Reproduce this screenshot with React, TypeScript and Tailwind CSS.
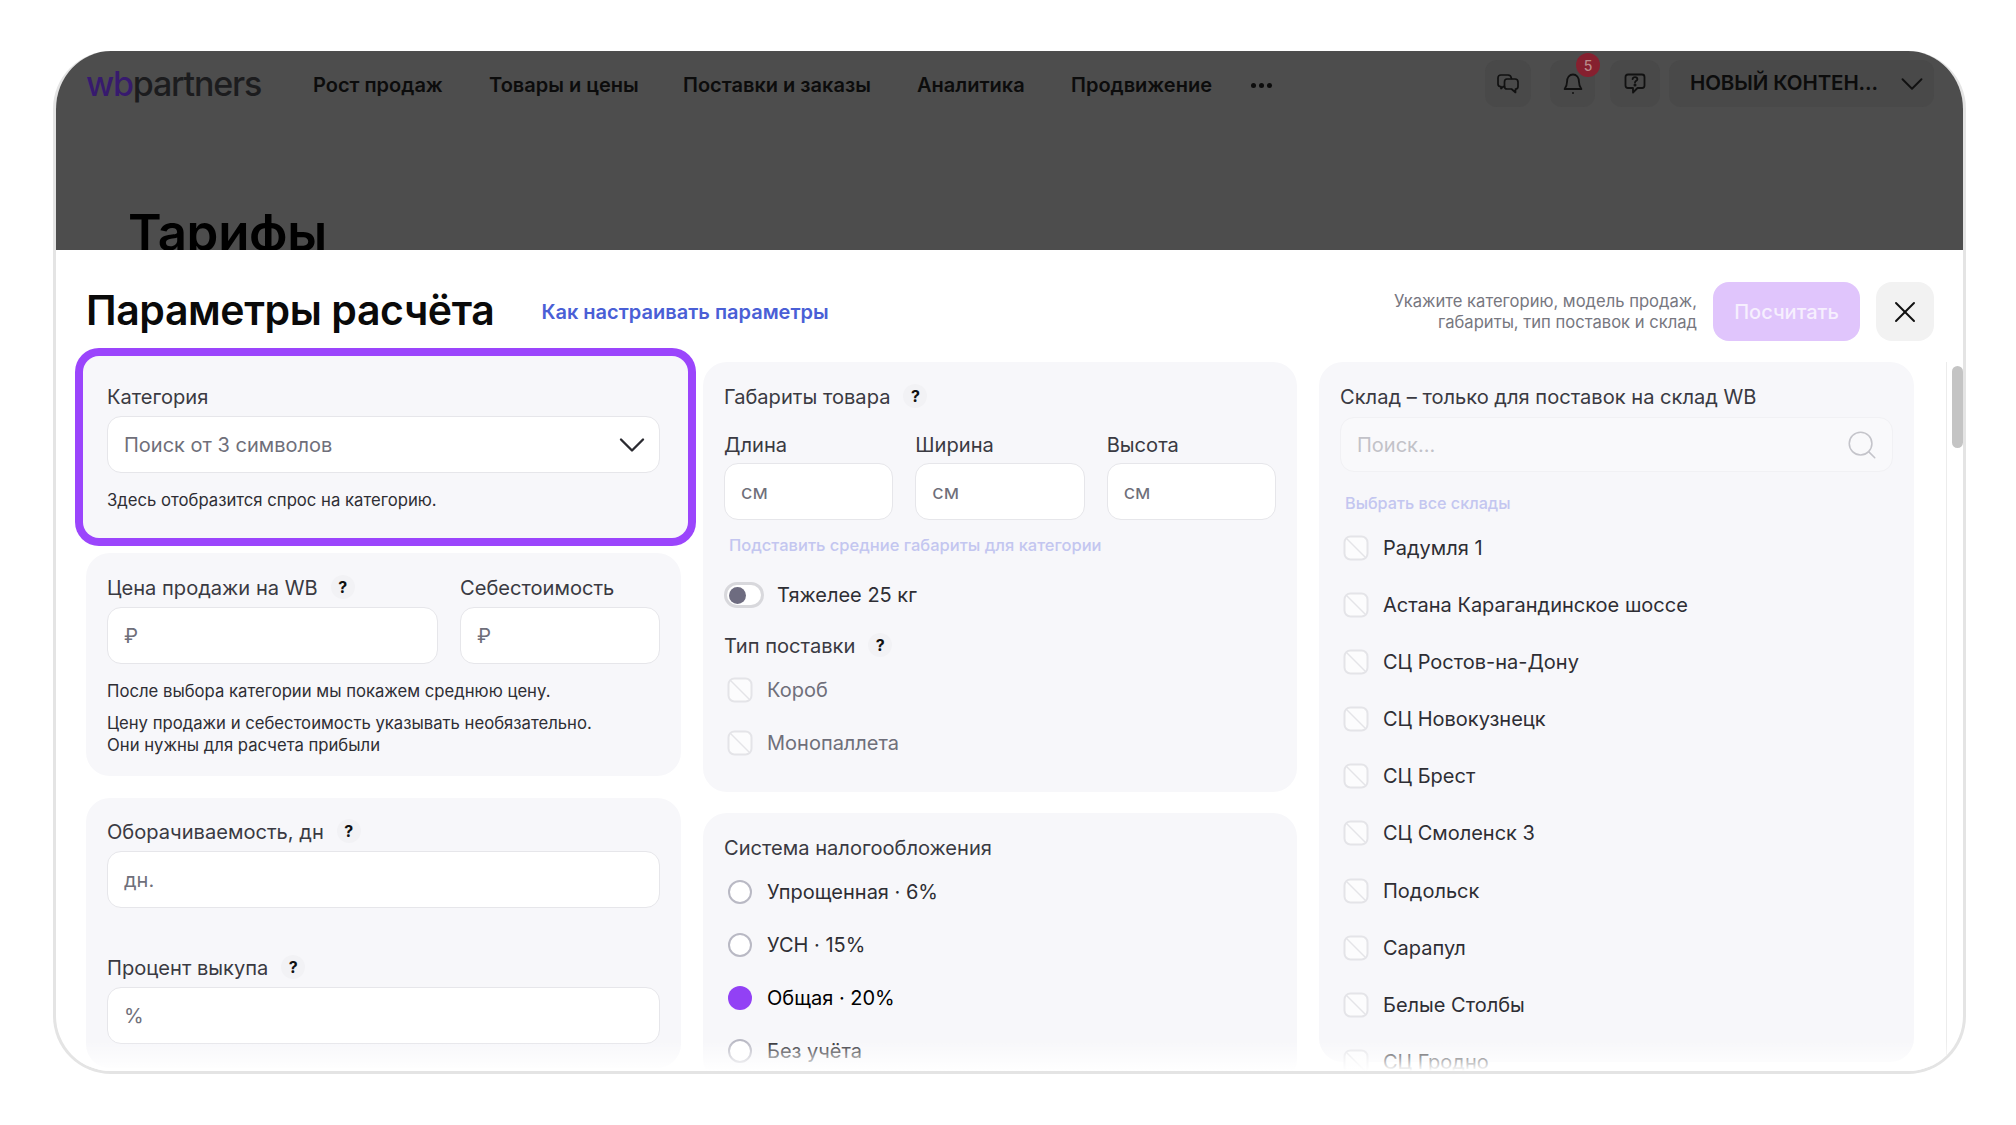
import { ChevronDown, Search, X } from "lucide-react";

const font = "font-['Inter','Noto_Sans',sans-serif]";

const navItems = [
  { label: "Рост продаж", cls: "w-[130px] mr-[46px]" },
  { label: "Товары и цены", cls: "w-[148px] mr-[46px]" },
  { label: "Поставки и заказы", cls: "w-[189px] mr-[45px]" },
  { label: "Аналитика", cls: "w-[110px] mr-[44px]" },
  { label: "Продвижение", cls: "w-[143px] mr-[37px]" },
];

const warehouses = [
  "Радумля 1",
  "Астана Карагандинское шоссе",
  "СЦ Ростов-на-Дону",
  "СЦ Новокузнецк",
  "СЦ Брест",
  "СЦ Смоленск 3",
  "Подольск",
  "Сарапул",
  "Белые Столбы",
  "СЦ Гродно",
];

const Hint = () => (
  <span className="ml-[13px] flex h-[24px] w-[24px] -translate-y-[1px] items-center justify-center rounded-full bg-[#f2f2f5] text-[16px] font-bold leading-none text-[#111]">
    ?
  </span>
);

const Label = ({ text, hint }: { text: string; hint?: boolean }) => (
  <div className="flex h-[24px] items-center text-[20.1px] leading-[24px] text-[#3a3a42] whitespace-nowrap">
    {text}
    {hint && <Hint />}
  </div>
);

const Field = ({ text, cls }: { text: string; cls: string }) => (
  <div
    className={`flex h-[57px] items-center rounded-[14px] border border-[#e6e6ea] bg-white px-[16px] text-[20px] text-[#6f6f7a] ${cls}`}
  >
    {text}
  </div>
);

const Check = () => (
  <svg width="26" height="26" viewBox="0 0 26 26" className="shrink-0">
    <rect x="1.5" y="1.5" width="23" height="23" rx="6" fill="#fcfcfd" stroke="#e4e4e8" strokeWidth="2" />
    <path d="M4 4L22 22" stroke="#e4e4e8" strokeWidth="1.5" />
  </svg>
);

const Radio = ({ active }: { active?: boolean }) =>
  active ? (
    <span className="h-[24px] w-[24px] shrink-0 rounded-full bg-[#9241f5]" />
  ) : (
    <span className="h-[24px] w-[24px] shrink-0 rounded-full border-2 border-[#b9b9c4] bg-white" />
  );

const ChatIcon = () => (
  <svg width="22" height="20" viewBox="0 0 22 20" fill="none" stroke="#111" strokeWidth="1.7" strokeLinejoin="round" strokeLinecap="round">
    <path d="M7.5 12.5H6.5L4 14.5V12.5H3.5Q1 12.5 1 10V4Q1 1 4 1H11Q14 1 14.5 4.5" />
    <path d="M10 5H18Q21 5 21 8V12.5Q21 15 18.5 15V18.5L14.5 15H10Q7.5 15 7.5 12.5V8Q7.5 5 10 5Z" />
  </svg>
);

const BellIcon = () => (
  <svg width="20" height="22" viewBox="0 0 20 22" fill="none" stroke="#111" strokeWidth="1.8" strokeLinejoin="round" strokeLinecap="round">
    <path d="M4 9C4 4.6 6.4 1.5 10 1.5C13.6 1.5 16 4.6 16 9C16 12.5 17 14.2 18.4 16H1.6C3 14.2 4 12.5 4 9Z" />
    <circle cx="10" cy="20" r="1" fill="#111" stroke="none" />
  </svg>
);

const HelpIcon = () => (
  <svg width="22" height="21" viewBox="0 0 22 21" fill="none" stroke="#111" strokeWidth="1.8" strokeLinejoin="round">
    <path d="M4 1.5H18Q20.5 1.5 20.5 4V12.5Q20.5 15 18 15H13.5L9 19.5V15H4Q1.5 15 1.5 12.5V4Q1.5 1.5 4 1.5Z" />
    <path d="M8.6 6.2C8.8 4.8 9.9 4.2 11 4.2C12.3 4.2 13.4 5 13.4 6.2C13.4 7.8 11 7.9 11 9.6" strokeLinecap="round" />
    <circle cx="11" cy="12" r="0.6" fill="#111" />
  </svg>
);

const IconBox = ({ children, cls }: { children: React.ReactNode; cls: string }) => (
  <div className={`relative flex h-[47px] items-center justify-center rounded-[12px] bg-[#494949] ${cls}`}>
    {children}
  </div>
);

export default function App() {
  return (
    <div className={`min-h-[1125px] bg-white pl-[53px] pt-[51px] ${font}`}>
      <div className="relative flex h-[1023px] w-[1913px] flex-col overflow-hidden rounded-[58px] border-[3px] border-t-0 border-[#e4e4e4] bg-white">
        {/* затемнённая страница за модалкой */}
        <header className="-mx-[3px] h-[199px] shrink-0 overflow-hidden bg-[#4d4d4d]">
          <div className="flex h-[56px] items-start pl-[33px] pr-[32px] pt-[9px]">
            <div className="mr-[55px] flex h-[47px] w-[172px] items-center text-[34px] font-medium leading-none tracking-[-1.2px]">
              <span className="text-[#371a6e]">wb</span>
              <span className="text-[#1c1c1e]">partners</span>
            </div>
            {navItems.map((n) => (
              <div key={n.label} className={`flex h-[50px] items-center whitespace-nowrap text-[20px] font-semibold text-[#0c0c0c] ${n.cls}`}>
                {n.label}
              </div>
            ))}
            <div className="flex h-[50px] items-center gap-[3px]">
              <span className="h-[5px] w-[5px] rounded-full bg-[#0c0c0c]" />
              <span className="h-[5px] w-[5px] rounded-full bg-[#0c0c0c]" />
              <span className="h-[5px] w-[5px] rounded-full bg-[#0c0c0c]" />
            </div>
            <div className="ml-auto flex items-center">
              <IconBox cls="w-[46px] mr-[19px]">
                <ChatIcon />
              </IconBox>
              <IconBox cls="w-[45px] mr-[15px]">
                <BellIcon />
                <span className="absolute -right-[5px] -top-[7px] flex h-[24px] w-[24px] items-center justify-center rounded-full bg-[#86202f] text-[14px] font-medium text-[#b98a8a]">
                  5
                </span>
              </IconBox>
              <IconBox cls="w-[50px] mr-[9px]">
                <HelpIcon />
              </IconBox>
              <div className="flex h-[47px] w-[265px] items-center justify-between rounded-[12px] bg-[#494949] pl-[21px] pr-[3px] text-[20.5px] font-semibold tracking-[-0.1px] text-[#0c0c0c]">
                НОВЫЙ КОНТЕН...
                <ChevronDown size={38} strokeWidth={1.2} color="#111" />
              </div>
            </div>
          </div>
          <h1 className="ml-[75px] mt-[96px] text-[51px] font-semibold leading-[60px] tracking-[-0.3px] text-black">Тарифы</h1>
        </header>

        <div className="relative min-h-0 flex-1 overflow-hidden pl-[30px] pr-[29px] pt-[32px]">
          <div className="flex h-[59px] items-center">
            <h2 className="-translate-y-[1px] text-[41px] font-semibold leading-none tracking-[-0.4px] text-[#0a0a0a]">Параметры расчёта</h2>
            <a className="ml-[47px] text-[20px] font-semibold text-[#4a5fd6]">Как настраивать параметры</a>
            <div className="ml-auto mr-[16px] text-right text-[16.6px] leading-[21px] text-[#77777f]">
              <div>Укажите категорию, модель продаж,</div>
              <div>габариты, тип поставок и склад</div>
            </div>
            <button className="mr-[16px] h-[59px] w-[147px] rounded-[16px] bg-[#e0c5fc] text-[20px] font-medium text-[#f6effe]">
              Посчитать
            </button>
            <button className="flex h-[59px] w-[58px] items-center justify-center rounded-[16px] bg-[#f2f2f2]">
              <X size={36} strokeWidth={1.3} color="#111" />
            </button>
          </div>

          <div className="mt-[21px] flex gap-[22px]">
            <div className="flex w-[595px] flex-col">
              {/* подсвеченный блок */}
              <div className="relative z-10 -ml-[3px] -mr-[7px] -mt-[6px] mb-[15px] h-[182px] rounded-[16px] bg-[#f7f7fa] pl-[24px] pr-[28px] pt-[29px] ring-8 ring-[#9b45fc]">
                <Label text="Категория" />
                <div className="mt-[7px] flex h-[57px] items-center justify-between rounded-[14px] border border-[#e6e6ea] bg-white pl-[16px] pr-[5px] text-[20px] text-[#6f6f7a]">
                  Поиск от 3 символов
                  <ChevronDown size={44} strokeWidth={1.3} color="#2a2a30" />
                </div>
                <div className="mt-[17px] text-[16.7px] leading-[21px] text-[#2e2e34]">Здесь отобразится спрос на категорию.</div>
              </div>

              <div className="h-[223px] rounded-[24px] bg-[#f7f7fa] px-[21px] pt-[23px]">
                <div className="flex gap-[22px]">
                  <div className="w-[331px]">
                    <Label text="Цена продажи на WB" hint />
                    <Field text="₽" cls="mt-[7px]" />
                  </div>
                  <div className="w-[200px]">
                    <Label text="Себестоимость" />
                    <Field text="₽" cls="mt-[7px]" />
                  </div>
                </div>
                <div className="mt-[17px] text-[16.7px] leading-[21px] text-[#2e2e34]">После выбора категории мы покажем среднюю цену.</div>
                <div className="mt-[10px] text-[16.7px] leading-[22px] text-[#2e2e34]">
                  <div>Цену продажи и себестоимость указывать необязательно.</div>
                  <div>Они нужны для расчета прибыли</div>
                </div>
              </div>

              <div className="mt-[22px] h-[270px] rounded-[24px] bg-[#f7f7fa] px-[21px] pt-[22px]">
                <Label text="Оборачиваемость, дн" hint />
                <Field text="дн." cls="mt-[7px]" />
                <div className="mt-[48px]">
                  <Label text="Процент выкупа" hint />
                </div>
                <Field text="%" cls="mt-[7px]" />
              </div>
            </div>

            <div className="flex w-[594px] flex-col">
              <div className="h-[430px] rounded-[24px] bg-[#f7f7fa] px-[21px] pt-[23px]">
                <Label text="Габариты товара" hint />
                <div className="mt-[24px] flex gap-[22px]">
                  {["Длина", "Ширина", "Высота"].map((t) => (
                    <div key={t} className="w-[170px]">
                      <Label text={t} />
                      <Field text="см" cls="mt-[6px]" />
                    </div>
                  ))}
                </div>
                <div className="ml-[5px] mt-[14px] text-[16.5px] font-medium leading-[22px] text-[#c3c6f0]">Подставить средние габариты для категории</div>
                <div className="mt-[26px] flex items-center gap-[13px] text-[20px] leading-[25px] text-[#2e2e34]">
                  <span className="flex h-[26px] w-[40px] items-center rounded-full border-[3px] border-[#d8d8dc] bg-white pl-[2px]">
                    <span className="h-[17px] w-[17px] rounded-full bg-[#6e6c80]" />
                  </span>
                  Тяжелее 25 кг
                </div>
                <div className="mt-[26px]">
                  <Label text="Тип поставки" hint />
                </div>
                <div className="mt-[19px] flex h-[26px] items-center gap-[14px] pl-[3px] text-[20px] text-[#6f6f7a]">
                  <Check />
                  Короб
                </div>
                <div className="mt-[27px] flex h-[26px] items-center gap-[14px] pl-[3px] text-[20px] text-[#6f6f7a]">
                  <Check />
                  Монопаллета
                </div>
              </div>

              <div className="mt-[21px] h-[270px] rounded-[24px] bg-[#f7f7fa] px-[21px] pt-[23px]">
                <Label text="Система налогообложения" />
                {[
                  { t: "Упрощенная · 6%", c: "text-[#2e2e34]", mt: "mt-[20px]" },
                  { t: "УСН · 15%", c: "text-[#2e2e34]", mt: "mt-[29px]" },
                  { t: "Общая · 20%", c: "text-black", mt: "mt-[29px]", on: true },
                  { t: "Без учёта", c: "text-[#2e2e34]", mt: "mt-[29px]" },
                ].map((r) => (
                  <div key={r.t} className={`flex h-[24px] items-center gap-[15px] pl-[4px] text-[20px] ${r.c} ${r.mt}`}>
                    <Radio active={r.on} />
                    {r.t}
                  </div>
                ))}
              </div>
            </div>

            <div className="h-[700px] w-[595px] rounded-[24px] bg-[#f7f7fa] px-[21px] pt-[23px]">
              <Label text="Склад – только для поставок на склад WB" />
              <div className="mt-[8px] flex h-[55px] items-center justify-between rounded-[14px] border border-[#f1f1f4] bg-[#f9f9fb] pl-[16px] pr-[13px] text-[20px] text-[#c2c2c8]">
                Поиск...
                <Search size={34} strokeWidth={1.1} color="#c4c4ca" />
              </div>
              <div className="ml-[5px] mt-[20px] text-[16.2px] font-medium leading-[22px] text-[#c3c6f0]">Выбрать все склады</div>
              <div className="mt-[21px] flex flex-col gap-[31.1px]">
                {warehouses.map((w) => (
                  <div key={w} className="flex h-[26px] items-center gap-[14px] pl-[3px] text-[20px] text-[#2e2e34]">
                    <Check />
                    {w}
                  </div>
                ))}
              </div>
            </div>
          </div>

          {/* полоса прокрутки и затухание контента снизу */}
          <div className="absolute bottom-0 right-0 top-[112px] w-[17px] border-l border-[#ececec]">
            <div className="absolute left-[5px] top-[4px] h-[82px] w-[11px] rounded-full bg-[#c4c4c4]" />
          </div>
          <div className="absolute inset-x-0 bottom-0 h-[30px] bg-gradient-to-b from-transparent to-white" />
        </div>
      </div>
    </div>
  );
}
